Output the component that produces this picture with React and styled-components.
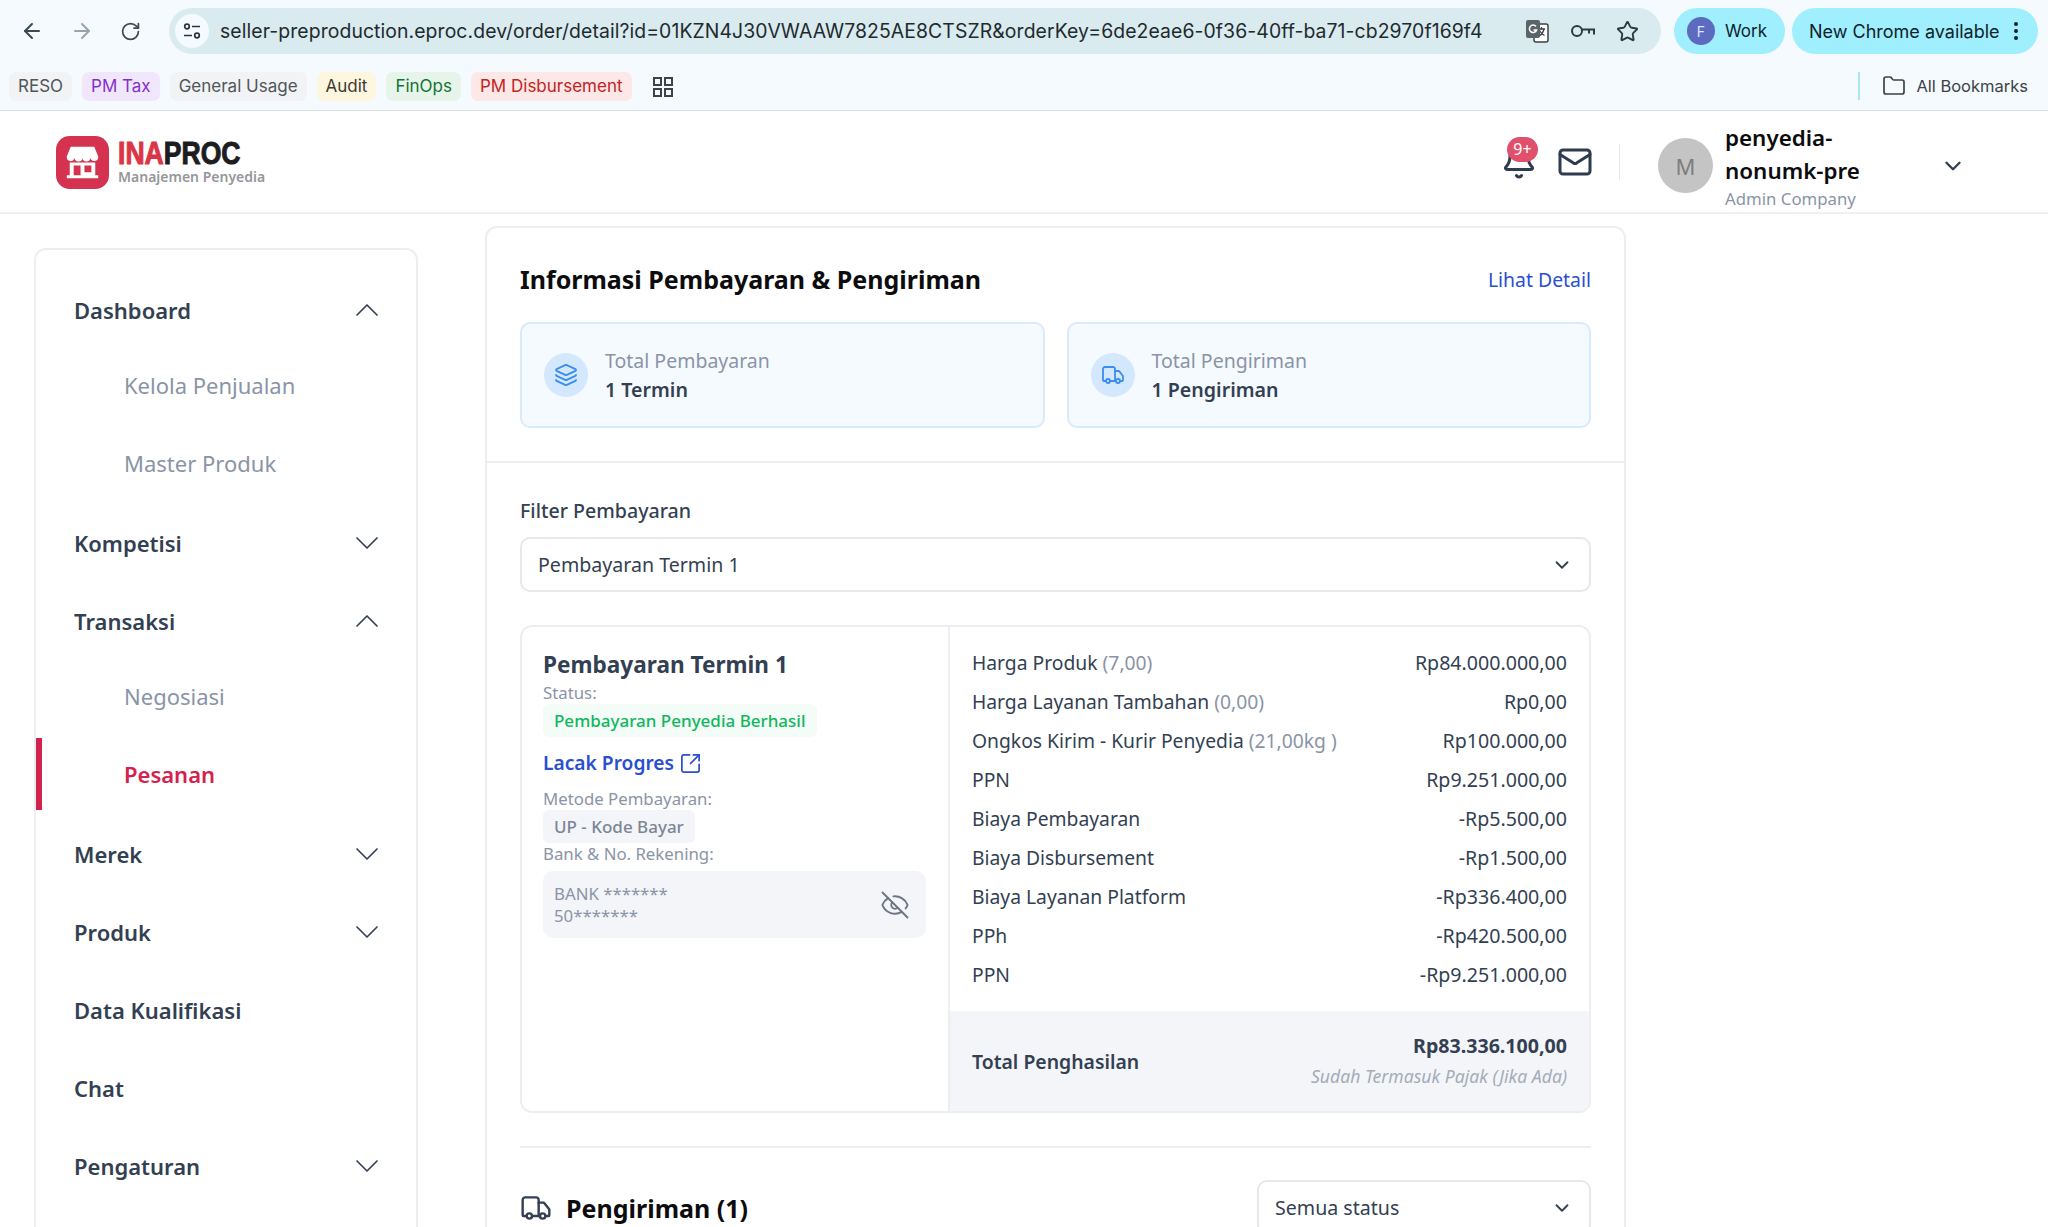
import React from 'react';
import styled, { createGlobalStyle } from 'styled-components';
import {
  ArrowLeft, ArrowRight, RotateCw, Star, Folder, Bell, Mail, ChevronDown, ChevronUp,
  Layers, Truck, EyeOff, SquareArrowOutUpRight,
} from 'lucide-react';

const Global = createGlobalStyle`
  html, body { margin: 0; padding: 0; height: 1227px; overflow: hidden; background: #fff; }
  body { font-family: "Noto Sans", "Open Sans", sans-serif; color: #333f52; }
  * { box-sizing: border-box; }
`;

const Page = styled.div`
  width: 2048px;
  height: 1227px;
  overflow: hidden;
  display: flex;
  flex-direction: column;
`;

/* browser chrome */
const Browser = styled.div`
  height: 111px;
  flex: none;
  background: #f4fafd;
  border-bottom: 1px solid #d8dfe3;
  font-family: Inter, "Liberation Sans", sans-serif;
`;
const Toolbar = styled.div`
  height: 62px;
  padding: 8px 10px 0 14px;
  display: flex;
  align-items: flex-start;
`;
const NavIcons = styled.div`
  display: flex;
  gap: 26px;
  height: 46px;
  align-items: center;
  width: 155px;
  padding-left: 6px;
  color: #3d4a50;
`;
const UrlBar = styled.div`
  width: 1492px;
  height: 46px;
  background: #d9ebef;
  border-radius: 23px;
  display: flex;
  align-items: center;
  padding: 0 22px 0 6px;
`;
const TuneBadge = styled.div`
  width: 34px;
  height: 34px;
  border-radius: 50%;
  background: #f4fafd;
  display: flex;
  align-items: center;
  justify-content: center;
  margin-right: 11px;
`;
const UrlText = styled.div`
  flex: 1;
  font-size: 19.37px;
  letter-spacing: 0.1px;
  color: #1e2a2e;
  white-space: nowrap;
`;
const UrlIcons = styled.div`
  display: flex;
  align-items: center;
  gap: 20px;
  color: #2f3a3f;
`;
const Pill = styled.div`
  height: 46px;
  border-radius: 23px;
  background: #9feffe;
  display: flex;
  align-items: center;
  color: #10222a;
  font-size: ${(p) => p.$fs}px;
  margin-left: ${(p) => p.$ml}px;
  width: ${(p) => p.$w}px;
  padding: ${(p) => p.$pad};
  justify-content: space-between;
  white-space: nowrap;
`;
const Avatar = styled.div`
  width: 28px;
  height: 28px;
  border-radius: 50%;
  background: #5c6bc0;
  color: #dfe3ff;
  font-size: 14px;
  display: flex;
  align-items: center;
  justify-content: center;
`;
const Bookmarks = styled.div`
  height: 48px;
  padding: 10px 20px 0 9px;
  display: flex;
  align-items: flex-start;
  gap: 10px;
`;
const Chip = styled.div`
  height: 29px;
  padding: 0 9px;
  border-radius: 7px;
  background: ${(p) => p.$bg};
  color: ${(p) => p.$fg};
  font-size: 17px;
  line-height: 29px;
  white-space: nowrap;
`;
const GridGlyph = styled.div`
  margin: 5px 0 0 11px;
  color: #3d4449;
  display: flex;
`;
const AllBookmarks = styled.div`
  margin-left: auto;
  height: 28px;
  display: flex;
  align-items: center;
  gap: 10px;
  font-size: 16.5px;
  color: #3b4347;
  border-left: 2px solid #a9e6f5;
  padding-left: 22px;
`;

/* app header */
const Header = styled.header`
  height: 103px;
  flex: none;
  border-bottom: 2px solid #eff0f2;
  display: flex;
  align-items: center;
  padding: 0 82px 0 56px;
`;
const Logo = styled.div`
  display: flex;
  align-items: center;
  gap: 9px;
  margin-top: 2px;
`;
const LogoWord = styled.div`
  display: flex;
  flex-direction: column;
  margin-top: -4px;
`;
const LogoName = styled.div`
  font-family: "Liberation Sans", sans-serif;
  font-weight: 700;
  font-size: 32px;
  line-height: 32px;
  height: 32px;
  transform: scaleX(0.83);
  transform-origin: left center;
  color: #1d1d1f;
  -webkit-text-stroke: 1px currentColor;
  span { color: #dc3545; }
`;
const LogoSub = styled.div`
  font-size: 14px;
  line-height: 16px;
  font-weight: 600;
  color: #96969a;
  white-space: nowrap;
`;
const HeaderRight = styled.div`
  margin-left: auto;
  display: flex;
  align-items: center;
`;
const BellWrap = styled.div`
  position: relative;
  width: 36px;
  height: 36px;
  color: #2f3b4e;
  margin-right: 4px;
`;
const Badge = styled.div`
  position: absolute;
  top: -7px;
  left: 6px;
  width: 31px;
  height: 25px;
  border-radius: 13px;
  background: #e0506c;
  color: #fff;
  font-size: 16px;
  line-height: 25px;
  text-align: center;
`;
const MailWrap = styled.div`
  margin-left: 16px;
  color: #2f3b4e;
  display: flex;
`;
const VLine = styled.div`
  width: 1px;
  height: 36px;
  background: #e6e8ec;
  margin: 0 38px 0 26px;
`;
const UserBlock = styled.div`
  display: flex;
  align-items: center;
  padding-top: 8px;
`;
const UserAvatar = styled.div`
  width: 55px;
  height: 55px;
  border-radius: 50%;
  background: #c4c4c4;
  color: #7d7d7d;
  font-size: 22px;
  display: flex;
  align-items: center;
  justify-content: center;
  margin-right: 12px;
`;
const UserText = styled.div`
  width: 215px;
`;
const UserName = styled.div`
  font-size: 22.4px;
  line-height: 33px;
  font-weight: 600;
  color: #0c0c0e;
  width: 160px;
`;
const UserRole = styled.div`
  font-size: 16.8px;
  line-height: 24px;
  color: #8a94a6;
`;

/* body */
const Shell = styled.div`
  flex: 1;
  display: flex;
  align-items: flex-start;
  padding-left: 34px;
  overflow: hidden;
`;
const Sidebar = styled.nav`
  width: 384px;
  flex: none;
  margin-top: 34px;
  padding-top: 21px;
  height: 1100px;
  border: 2px solid #eceef1;
  border-radius: 12px;
`;
const NavRow = styled.div`
  height: ${(p) => (p.$active ? 72 : 78)}px;
  display: flex;
  align-items: center;
  justify-content: space-between;
  padding: 0 29px 0 ${(p) => (p.$sub ? 82 : 32)}px;
  font-size: 22px;
  font-weight: ${(p) => (p.$sub && !p.$active ? 400 : 600)};
  color: ${(p) => (p.$active ? '#d4224f' : p.$sub ? '#8a94a6' : '#333f52')};
  border-left: 6px solid ${(p) => (p.$active ? '#d4224f' : 'transparent')};
  margin-top: ${(p) => (p.$first ? -3 : p.$active ? 3 : 0)}px;
  margin-bottom: ${(p) => (p.$active ? 5 : p.$last ? 2 : 0)}px;
`;
const Chev = styled.span`
  display: flex;
  color: #333f52;
`;
const Main = styled.main`
  width: 1141px;
  flex: none;
  margin: 12px 0 0 67px;
  border: 2px solid #eceef1;
  border-radius: 12px;
`;
const TopSection = styled.section`
  padding: 33px 33px 33px;
  border-bottom: 2px solid #eceef1;
`;
const TitleRow = styled.div`
  display: flex;
  justify-content: space-between;
  align-items: center;
  margin-bottom: 25px;
`;
const H2 = styled.h2`
  margin: 0;
  font-size: 25px;
  line-height: 36px;
  font-weight: 700;
  color: #0c0c0e;
`;
const TextLink = styled.a`
  font-size: ${(p) => p.$fs || 19.4}px;
  color: #2a4fcf;
  font-weight: ${(p) => p.$weight || 400};
  display: inline-flex;
  align-items: center;
  gap: 5px;
`;
const Stats = styled.div`
  display: grid;
  grid-template-columns: 1fr 1fr;
  gap: 22px;
`;
const StatCard = styled.div`
  height: 106px;
  background: #f5faff;
  border: 2px solid #d9eafb;
  border-radius: 10px;
  display: flex;
  align-items: center;
  padding: 0 22px;
  gap: 17px;
`;
const StatIcon = styled.div`
  width: 44px;
  height: 44px;
  border-radius: 50%;
  background: #d3e8fc;
  color: #3b8df0;
  display: flex;
  align-items: center;
  justify-content: center;
`;
const StatLabel = styled.div`
  font-size: 19.5px;
  line-height: 29px;
  color: #8a94a6;
`;
const StatValue = styled.div`
  font-size: 19.6px;
  line-height: 29px;
  font-weight: 600;
  color: #333f52;
`;
const BodySection = styled.section`
  padding: 34px 33px 0;
`;
const FieldLabel = styled.div`
  font-size: 19.6px;
  line-height: 28px;
  font-weight: 500;
  color: #333f52;
  margin-bottom: 12px;
`;
const Select = styled.div`
  height: 55px;
  border: 2px solid #e6e8ec;
  border-radius: 10px;
  display: flex;
  align-items: center;
  justify-content: space-between;
  padding: 0 16px;
  font-size: 19.6px;
  color: #333f52;
  width: ${(p) => p.$w || 'auto'};
`;
const PayCard = styled.div`
  margin-top: 33px;
  border: 2px solid #eceef1;
  border-radius: 12px;
  display: grid;
  grid-template-columns: 428px 1fr;
  overflow: hidden;
`;
const PayLeft = styled.div`
  padding: 21px 22px 0 21px;
  border-right: 2px solid #eceef1;
`;
const PayTitle = styled.div`
  font-size: 22.6px;
  line-height: 33px;
  font-weight: 700;
  color: #333f52;
  margin-bottom: 1px;
`;
const Small = styled.div`
  font-size: 16.8px;
  line-height: 22px;
  color: #8a94a6;
`;
const Tag = styled.div`
  display: inline-block;
  height: 33px;
  line-height: 33px;
  padding: 0 11px;
  border-radius: 6px;
  font-size: 17px;
  font-weight: 500;
  background: ${(p) => p.$bg};
  color: ${(p) => p.$fg};
`;
const ProgressRow = styled.div`
  margin: 11px 0 10px;
  line-height: 30px;
  display: flex;
`;
const BankBox = styled.div`
  margin-top: 6px;
  height: 67px;
  background: #f3f5f9;
  border-radius: 10px;
  padding: 0 16px 0 11px;
  display: flex;
  align-items: center;
  justify-content: space-between;
  color: #8a94a6;
  font-size: 16.8px;
  line-height: 22px;
`;
const PayRight = styled.div`
  display: flex;
  flex-direction: column;
`;
const Rows = styled.div`
  padding: 16px 22px 17px;
`;
const Row = styled.div`
  height: 39px;
  display: flex;
  align-items: center;
  justify-content: space-between;
  font-size: 19.6px;
  color: #333f52;
  span { color: #8a94a6; }
`;
const RowLabel = styled.div`
  font-size: 19.3px;
`;
const Total = styled.div`
  height: 100px;
  background: #f3f5f9;
  display: flex;
  align-items: center;
  justify-content: space-between;
  padding: 0 22px;
`;
const TotalLabel = styled.div`
  font-size: 19.4px;
  font-weight: 600;
  color: #333f52;
`;
const TotalAmount = styled.div`
  font-size: 19.6px;
  line-height: 30px;
  font-weight: 700;
  color: #333f52;
  text-align: right;
`;
const TotalNote = styled.div`
  font-size: 17.6px;
  line-height: 30px;
  font-style: italic;
  color: #a3acb8;
`;
const Divider = styled.hr`
  border: 0;
  border-top: 2px solid #eceef1;
  margin: 33px 0 32px;
`;
const ShipRow = styled.div`
  display: flex;
  justify-content: space-between;
  align-items: center;
`;
const ShipTitle = styled.div`
  display: flex;
  align-items: center;
  gap: 14px;
  font-size: 25px;
  font-weight: 700;
  color: #0c0c0e;
  svg { color: #333f52; }
`;

const nav = [
  { t: 'Dashboard', c: 'up' },
  { t: 'Kelola Penjualan', sub: true, first: true },
  { t: 'Master Produk', sub: true, last: true },
  { t: 'Kompetisi', c: 'down' },
  { t: 'Transaksi', c: 'up' },
  { t: 'Negosiasi', sub: true, first: true },
  { t: 'Pesanan', sub: true, active: true },
  { t: 'Merek', c: 'down' },
  { t: 'Produk', c: 'down' },
  { t: 'Data Kualifikasi' },
  { t: 'Chat' },
  { t: 'Pengaturan', c: 'down' },
];

const rows = [
  ['Harga Produk', '(7,00)', 'Rp84.000.000,00'],
  ['Harga Layanan Tambahan', '(0,00)', 'Rp0,00'],
  ['Ongkos Kirim - Kurir Penyedia', '(21,00kg )', 'Rp100.000,00'],
  ['PPN', '', 'Rp9.251.000,00'],
  ['Biaya Pembayaran', '', '-Rp5.500,00'],
  ['Biaya Disbursement', '', '-Rp1.500,00'],
  ['Biaya Layanan Platform', '', '-Rp336.400,00'],
  ['PPh', '', '-Rp420.500,00'],
  ['PPN', '', '-Rp9.251.000,00'],
];

const StoreMark = () => (
  <svg width="53" height="53" viewBox="0 0 54 54">
    <rect width="54" height="54" rx="14" fill="#d5324f" />
    <path d="M15 11h24l4 10a4 4 0 0 1-8 1 4 4 0 0 1-8 0 4 4 0 0 1-8 0 4 4 0 0 1-8-1z" fill="#fff" />
    <path fillRule="evenodd" d="M14 27h26v13h3v3H11v-3h3zM18 30v10h7V30zM29 30v7h7v-7z" fill="#fff" />
  </svg>
);

const TuneIcon = () => (
  <svg width="20" height="20" viewBox="0 0 20 20" fill="none" stroke="#2b3438" strokeWidth="1.7">
    <circle cx="5" cy="5.500" r="2.300" />
    <path d="M10 5.500h8M2 14.500h8" />
    <circle cx="15" cy="14.500" r="2.300" />
  </svg>
);

const TranslateIcon = () => (
  <svg width="26" height="26" viewBox="0 0 26 26">
    <rect x="10" y="6" width="14" height="18" rx="2" fill="#fff" stroke="#3a4347" strokeWidth="1.500" />
    <path d="M14 11h7M17.500 9v2M20 11c-1 4-3 6-5 7M15.500 12.500c1 2 3 4 5 5" fill="none" stroke="#3a4347" strokeWidth="1.300" />
    <rect x="2" y="2" width="14" height="18" rx="2" fill="#5b6468" />
    <path d="M12 8.500a3.700 3.700 0 1 0 .6 3.500H9.500" fill="none" stroke="#fff" strokeWidth="1.500" />
  </svg>
);

const KeyIcon = () => (
  <svg width="26" height="18" viewBox="0 0 26 18" fill="none" stroke="#2f3a3f" strokeWidth="2">
    <circle cx="7" cy="9" r="5" />
    <path d="M12 7.500h12v5M19 7.500v4" />
  </svg>
);

const AppsIcon = () => (
  <svg width="20" height="20" viewBox="0 0 20 20" fill="none" stroke="currentColor" strokeWidth="2">
    <rect x="1" y="1" width="7" height="7" />
    <rect x="12" y="1" width="7" height="7" />
    <rect x="1" y="12" width="7" height="7" />
    <rect x="12" y="12" width="7" height="7" />
  </svg>
);

const Kebab = () => (
  <svg width="6" height="20" viewBox="0 0 6 20" fill="#10222a">
    <circle cx="3" cy="3" r="2" />
    <circle cx="3" cy="10" r="2" />
    <circle cx="3" cy="17" r="2" />
  </svg>
);

const App = () => {
  return (
    <Page>
      <Global />
      <Browser>
        <Toolbar>
          <NavIcons>
            <ArrowLeft size={24} strokeWidth={2} />
            <ArrowRight size={24} strokeWidth={2} color="#9aa5aa" />
            <RotateCw size={21} strokeWidth={2} />
          </NavIcons>
          <UrlBar>
            <TuneBadge><TuneIcon /></TuneBadge>
            <UrlText>seller-preproduction.eproc.dev/order/detail?id=01KZN4J30VWAAW7825AE8CTSZR&amp;orderKey=6de2eae6-0f36-40ff-ba71-cb2970f169f4</UrlText>
            <UrlIcons>
              <TranslateIcon />
              <KeyIcon />
              <Star size={23} strokeWidth={2} />
            </UrlIcons>
          </UrlBar>
          <Pill $ml={13} $w={111} $fs={17} $pad="0 18px 0 13px">
            <Avatar>F</Avatar>
            Work
          </Pill>
          <Pill $ml={7} $w={246} $fs={18} $pad="0 19px 0 17px">
            New Chrome available
            <Kebab />
          </Pill>
        </Toolbar>
        <Bookmarks>
          <Chip $bg="#f1f3f4" $fg="#50565b">RESO</Chip>
          <Chip $bg="#f1e7fd" $fg="#8430ce">PM Tax</Chip>
          <Chip $bg="#f1f3f4" $fg="#50565b">General Usage</Chip>
          <Chip $bg="#fef7e0" $fg="#3c3a32">Audit</Chip>
          <Chip $bg="#e6f4ea" $fg="#137333">FinOps</Chip>
          <Chip $bg="#fce8e6" $fg="#c5221f">PM Disbursement</Chip>
          <GridGlyph><AppsIcon /></GridGlyph>
          <AllBookmarks>
            <Folder size={24} strokeWidth={1.700} />
            All Bookmarks
          </AllBookmarks>
        </Bookmarks>
      </Browser>

      <Header>
        <Logo>
          <StoreMark />
          <LogoWord>
            <LogoName><span>INA</span>PROC</LogoName>
            <LogoSub>Manajemen Penyedia</LogoSub>
          </LogoWord>
        </Logo>
        <HeaderRight>
          <BellWrap>
            <Bell size={36} strokeWidth={2} />
            <Badge>9+</Badge>
          </BellWrap>
          <MailWrap><Mail size={36} strokeWidth={2} /></MailWrap>
          <VLine />
          <UserBlock>
            <UserAvatar>M</UserAvatar>
            <UserText>
              <UserName>penyedia-nonumk-pre</UserName>
              <UserRole>Admin Company</UserRole>
            </UserText>
            <ChevronDown size={26} strokeWidth={2.200} color="#333f52" />
          </UserBlock>
        </HeaderRight>
      </Header>

      <Shell>
        <Sidebar>
          {nav.map((n) => (
            <NavRow key={n.t} $sub={n.sub} $active={n.active} $first={n.first} $last={n.last}>
              {n.t}
              {n.c && (
                <Chev>
                  {n.c === 'up' ? <ChevronUp size={40} strokeWidth={1} /> : <ChevronDown size={40} strokeWidth={1} />}
                </Chev>
              )}
            </NavRow>
          ))}
        </Sidebar>

        <Main>
          <TopSection>
            <TitleRow>
              <H2>Informasi Pembayaran &amp; Pengiriman</H2>
              <TextLink>Lihat Detail</TextLink>
            </TitleRow>
            <Stats>
              <StatCard>
                <StatIcon><Layers size={24} strokeWidth={1.800} /></StatIcon>
                <div>
                  <StatLabel>Total Pembayaran</StatLabel>
                  <StatValue>1 Termin</StatValue>
                </div>
              </StatCard>
              <StatCard>
                <StatIcon><Truck size={24} strokeWidth={1.800} /></StatIcon>
                <div>
                  <StatLabel>Total Pengiriman</StatLabel>
                  <StatValue>1 Pengiriman</StatValue>
                </div>
              </StatCard>
            </Stats>
          </TopSection>

          <BodySection>
            <FieldLabel>Filter Pembayaran</FieldLabel>
            <Select>
              Pembayaran Termin 1
              <ChevronDown size={22} strokeWidth={2} />
            </Select>

            <PayCard>
              <PayLeft>
                <PayTitle>Pembayaran Termin 1</PayTitle>
                <Small>Status:</Small>
                <Tag $bg="#f3fcf6" $fg="#12b65f">Pembayaran Penyedia Berhasil</Tag>
                <ProgressRow>
                  <TextLink $weight={600} $fs={19.2}>
                    Lacak Progres
                    <SquareArrowOutUpRight size={23} strokeWidth={1.800} />
                  </TextLink>
                </ProgressRow>
                <Small>Metode Pembayaran:</Small>
                <Tag $bg="#f3f5f9" $fg="#7b8596">UP - Kode Bayar</Tag>
                <Small>Bank &amp; No. Rekening:</Small>
                <BankBox>
                  <div>BANK *******<br />50*******</div>
                  <EyeOff size={30} strokeWidth={1.500} color="#6b7584" />
                </BankBox>
              </PayLeft>
              <PayRight>
                <Rows>
                  {rows.map((r, i) => (
                    <Row key={i}>
                      <RowLabel>{r[0]} {r[1] && <span>{r[1]}</span>}</RowLabel>
                      <div>{r[2]}</div>
                    </Row>
                  ))}
                </Rows>
                <Total>
                  <TotalLabel>Total Penghasilan</TotalLabel>
                  <div>
                    <TotalAmount>Rp83.336.100,00</TotalAmount>
                    <TotalNote>Sudah Termasuk Pajak (Jika Ada)</TotalNote>
                  </div>
                </Total>
              </PayRight>
            </PayCard>

            <Divider />

            <ShipRow>
              <ShipTitle>
                <Truck size={32} strokeWidth={1.800} />
                Pengiriman (1)
              </ShipTitle>
              <Select $w="334px">
                Semua status
                <ChevronDown size={22} strokeWidth={2} />
              </Select>
            </ShipRow>
          </BodySection>
        </Main>
      </Shell>
    </Page>
  );
};

export default App;
